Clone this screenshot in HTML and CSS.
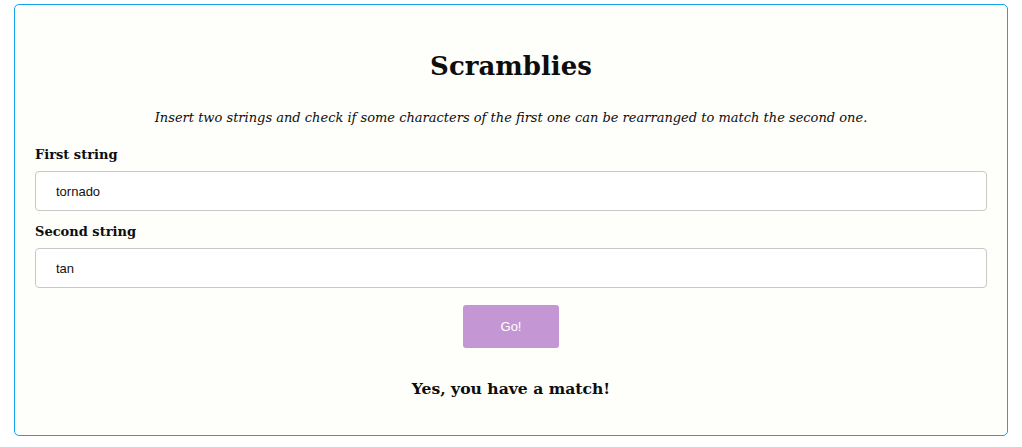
FILE: index.html
```html
<!DOCTYPE html>
<html lang="en">
<head>
<meta charset="utf-8">
<title>Scramblies</title>
<link rel="stylesheet" href="styles.css">
</head>
<body>
<main class="card">
  <h1 class="title">Scramblies</h1>
  <p class="subtitle">Insert two strings and check if some characters of the first one can be rearranged to match the second one.</p>
  <form class="form">
    <label class="label" for="first">First string</label>
    <input class="field" id="first" type="text" value="tornado">
    <label class="label label-second" for="second">Second string</label>
    <input class="field" id="second" type="text" value="tan">
    <div class="actions">
      <button class="go" type="button">Go!</button>
    </div>
  </form>
  <p class="result">Yes, you have a match!</p>
</main>
</body>
</html>
```
FILE: styles.css
```css
html, body {
  margin: 0;
  padding: 0;
  background: #ffffff;
}
body {
  padding: 4px 14px 11px 14px;
  font-family: "DejaVu Serif", "Liberation Serif", serif;
  color: #0d0d0d;
}
.card {
  border: 1px solid #13a6ec;
  border-radius: 5px;
  background: #fefefa;
  padding: 21px 20px 36px 20px;
  box-sizing: border-box;
  height: 432px;
}
.title {
  margin: 20px 0 0 0;
  font-size: 26px;
  line-height: 40px;
  font-weight: bold;
  text-align: center;
}
.subtitle {
  margin: 20px 0 0 0;
  font-size: 13px;
  line-height: 24px;
  font-style: italic;
  text-align: center;
}
.form {
  display: flex;
  flex-direction: column;
  margin: 0;
}
.label {
  margin-top: 14px;
  font-size: 13px;
  line-height: 22px;
  font-weight: bold;
}
.label-second {
  margin-top: 10px;
}
.field {
  margin-top: 5px;
  height: 40px;
  box-sizing: border-box;
  border: 1px solid #c8c8c8;
  border-radius: 4px;
  background: #ffffff;
  padding: 0 20px;
  font-family: "Liberation Sans", Arial, sans-serif;
  font-size: 13px;
  color: #111;
}
.actions {
  display: flex;
  justify-content: center;
  margin-top: 17px;
}
.go {
  width: 96px;
  height: 43px;
  border: none;
  border-radius: 3px;
  background: #c497d4;
  color: #ffffff;
  font-family: "Liberation Sans", Arial, sans-serif;
  font-size: 13px;
}
.result {
  margin: 29px 0 0 0;
  font-size: 15.6px;
  line-height: 24px;
  font-weight: bold;
  text-align: center;
}
```
